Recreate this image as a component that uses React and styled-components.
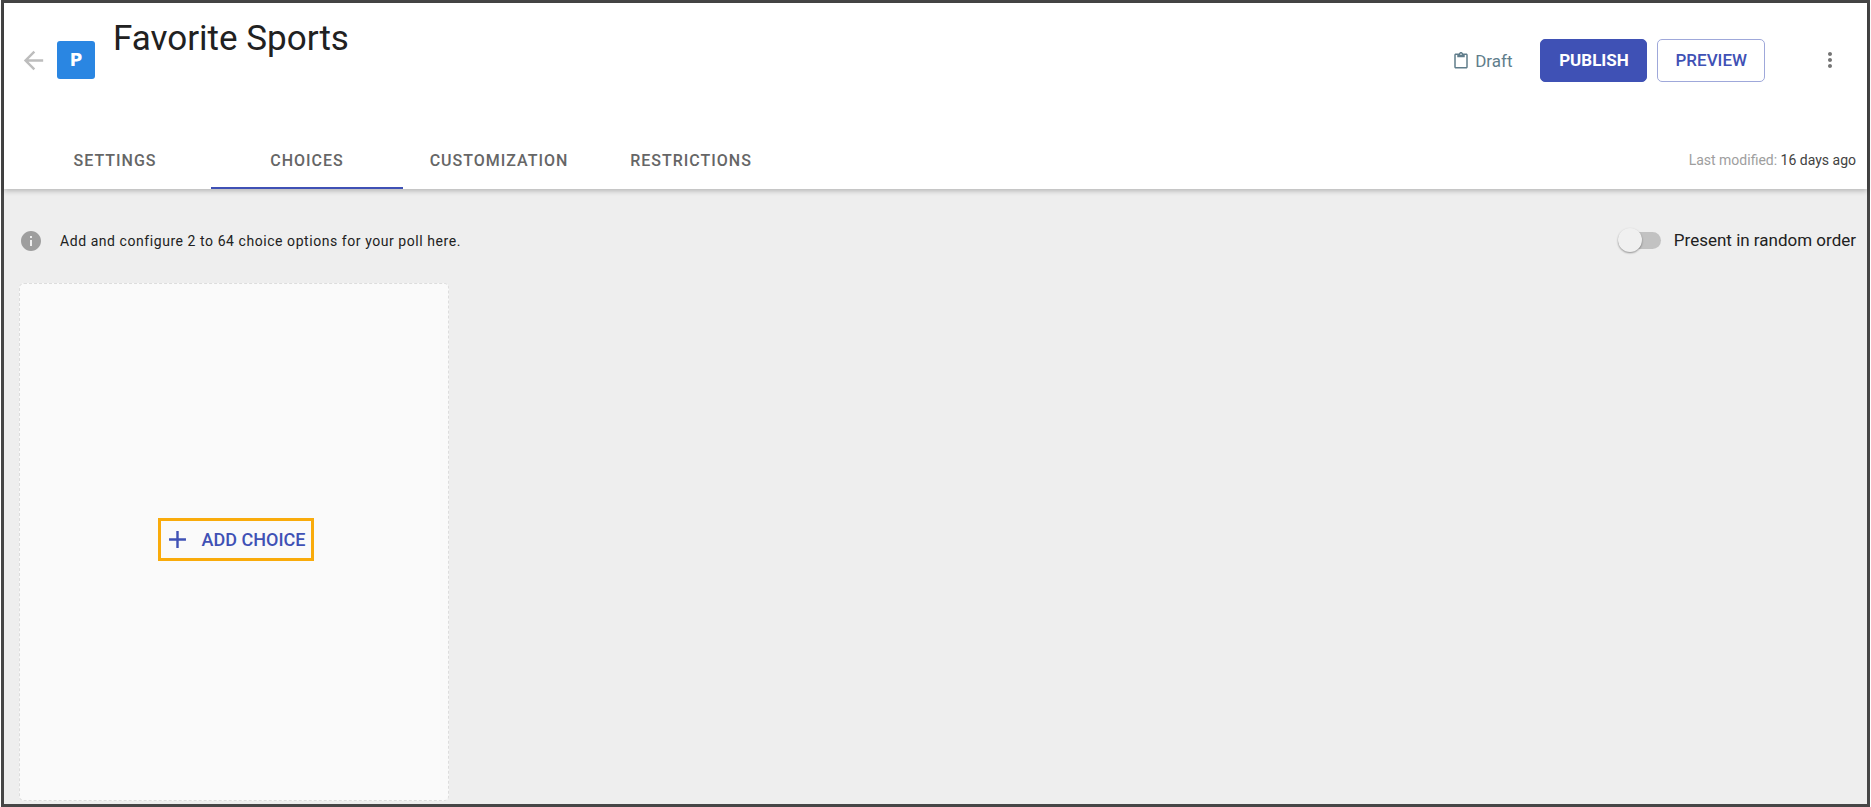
import React, { useState } from 'react';
import styled, { createGlobalStyle } from 'styled-components';
import { MdAdd, MdArrowBack, MdContentPaste, MdInfo, MdMoreVert } from 'react-icons/md';

const GlobalStyle = createGlobalStyle`
  * {
    box-sizing: border-box;
  }

  body {
    margin: 0;
    background: #fff;
    color: #212121;
    font-family: Roboto, "Liberation Sans", sans-serif;
  }

  button, input {
    font-family: inherit;
  }
`;

const Frame = styled.div`
  display: flex;
  flex-direction: column;
  min-height: 100vh;
  margin: 0 1px;
  border: 3px solid #464646;
  background: #eee;
`;

const Header = styled.header`
  background: #fff;
  box-shadow: 0 2px 5px rgba(0, 0, 0, 0.24);
`;

const Toolbar = styled.div`
  display: flex;
  align-items: center;
  height: 114px;
  padding: 0 13px 0 15px;
`;

const IconButton = styled.button`
  display: flex;
  align-items: center;
  justify-content: center;
  padding: 0;
  border: none;
  background: none;
  color: ${({ $color }) => $color};
  cursor: pointer;
`;

const MenuButton = styled(IconButton)`
  width: 48px;
  height: 48px;
  margin-left: 41px;
`;

const Badge = styled.div`
  display: flex;
  align-items: center;
  justify-content: center;
  width: 38px;
  height: 38px;
  margin-left: 9px;
  border-radius: 3px;
  background: #2a86e2;
  color: #fff;
  font-family: "DejaVu Sans", sans-serif;
  font-size: 17px;
  font-weight: 700;
`;

const Title = styled.h1`
  flex: 1;
  align-self: flex-start;
  margin: 15px 0 0 18px;
  font-size: 35px;
  font-weight: 400;
  line-height: 42px;
`;

const Status = styled.span`
  display: flex;
  align-items: center;
  gap: 5px;
  margin-right: 28px;
  padding-top: 2px;
  color: #607d8b;
  font-size: 17px;
  line-height: 24px;
`;

const Actions = styled.div`
  display: flex;
  gap: 10px;
`;

const ActionButton = styled.button`
  min-width: 107px;
  height: 43px;
  padding: 0 17px;
  border: 1px solid ${({ $primary }) => ($primary ? '#3f51b5' : '#9fa8da')};
  border-radius: 5px;
  background: ${({ $primary }) => ($primary ? '#3f51b5' : '#fff')};
  color: ${({ $primary }) => ($primary ? '#fff' : '#3f51b5')};
  font-size: 17px;
  font-weight: ${({ $primary }) => ($primary ? 700 : 500)};
  cursor: pointer;
`;

const TabRow = styled.div`
  display: flex;
  align-items: center;
  justify-content: space-between;
  margin-top: 14px;
  padding: 0 11px 0 15px;
`;

const Tabs = styled.nav`
  display: flex;
`;

const Tab = styled.button`
  width: 192px;
  height: 58px;
  padding: 2px 0 0;
  border: none;
  border-bottom: 2px solid ${({ $active }) => ($active ? '#3f51b5' : 'transparent')};
  background: none;
  color: #666;
  font-size: 16px;
  font-weight: 500;
  letter-spacing: 1px;
  cursor: pointer;
`;

const Modified = styled.span`
  color: #9e9e9e;
  font-size: 14px;

  span {
    color: #424242;
  }
`;

const Content = styled.main`
  flex: 1;
  display: flex;
  flex-direction: column;
  padding: 37px 11px 3px 15px;
`;

const InfoRow = styled.div`
  display: flex;
  align-items: center;
  justify-content: space-between;
  height: 30px;
  margin-bottom: 27px;
`;

const Hint = styled.p`
  display: flex;
  align-items: center;
  gap: 17px;
  margin: 0;
  font-size: 14px;
  letter-spacing: 0.04em;

  svg {
    color: #9e9e9e;
  }
`;

const SwitchLabel = styled.label`
  display: flex;
  align-items: center;
  gap: 13px;
  padding-bottom: 2px;
  font-size: 17px;
  cursor: pointer;
`;

const Switch = styled.input`
  appearance: none;
  display: flex;
  align-items: center;
  width: 43px;
  height: 17px;
  margin: 0;
  border-radius: 9px;
  background: #c2c2c2;
  cursor: pointer;

  &::before {
    content: '';
    flex: none;
    width: 24px;
    height: 24px;
    border-radius: 50%;
    background: #f0f0f0;
    box-shadow: 0 1px 2px rgba(0, 0, 0, 0.4);
  }

  &:checked {
    justify-content: flex-end;
    background: #9fa8da;
  }

  &:checked::before {
    background: #3f51b5;
  }
`;

const ChoiceCard = styled.section`
  flex: 1;
  display: flex;
  align-items: center;
  justify-content: center;
  width: 430px;
  max-width: 100%;
  padding: 0 0 6px 4px;
  border: 1px dashed #ddd;
  border-radius: 5px;
  background: #fafafa;
`;

const AddButton = styled.button`
  display: flex;
  align-items: center;
  gap: 10px;
  height: 43px;
  padding: 0 6px 0 2px;
  border: 3px solid #f9ab0b;
  background: none;
  color: #3f51b5;
  font-size: 18px;
  font-weight: 500;
  cursor: pointer;
`;

const TABS = ['SETTINGS', 'CHOICES', 'CUSTOMIZATION', 'RESTRICTIONS'];

const App = () => {
  const [activeTab, setActiveTab] = useState('CHOICES');
  const [randomOrder, setRandomOrder] = useState(false);

  return (
    <>
      <GlobalStyle />
      <Frame>
        <Header>
          <Toolbar>
            <IconButton $color="#bdbdbd" aria-label="Back">
              <MdArrowBack size={29} />
            </IconButton>
            <Badge>P</Badge>
            <Title>Favorite Sports</Title>
            <Status>
              <MdContentPaste size={18} />
              Draft
            </Status>
            <Actions>
              <ActionButton $primary>PUBLISH</ActionButton>
              <ActionButton>PREVIEW</ActionButton>
            </Actions>
            <MenuButton $color="#757575" aria-label="More options">
              <MdMoreVert size={24} />
            </MenuButton>
          </Toolbar>
          <TabRow>
            <Tabs>
              {TABS.map(tab => (
                <Tab key={tab} $active={tab === activeTab} onClick={() => setActiveTab(tab)}>
                  {tab}
                </Tab>
              ))}
            </Tabs>
            <Modified>Last modified: <span>16 days ago</span></Modified>
          </TabRow>
        </Header>
        <Content>
          <InfoRow>
            <Hint>
              <MdInfo size={24} />
              Add and configure 2 to 64 choice options for your poll here.
            </Hint>
            <SwitchLabel>
              <Switch
                type="checkbox"
                checked={randomOrder}
                onChange={e => setRandomOrder(e.target.checked)}
              />
              Present in random order
            </SwitchLabel>
          </InfoRow>
          <ChoiceCard>
            <AddButton>
              <MdAdd size={29} />
              ADD CHOICE
            </AddButton>
          </ChoiceCard>
        </Content>
      </Frame>
    </>
  );
};

export default App;
